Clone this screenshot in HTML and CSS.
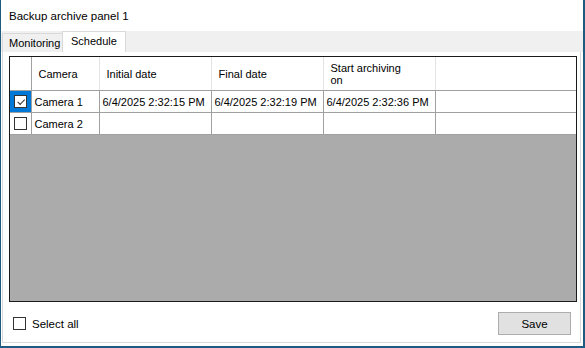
FILE: index.html
```html
<!DOCTYPE html>
<html lang="en">

<head>
    <meta charset="UTF-8">
    <meta name="viewport" content="width=device-width, initial-scale=1.0">
    <title>Backup archive panel 1</title>
    <link rel="stylesheet" href="styles.css">
</head>

<body>
    <div class="window">
        <div class="title">Backup archive panel 1</div>

        <div class="tabs">
            <div class="tab">Monitoring</div>
            <div class="tab active">Schedule</div>
        </div>

        <div class="tab-page">
            <div class="grid">
                <table class="grid-table">
                    <colgroup>
                        <col class="col-check">
                        <col class="col-camera">
                        <col class="col-date">
                        <col class="col-date">
                        <col class="col-date">
                        <col>
                    </colgroup>
                    <thead>
                        <tr>
                            <th></th>
                            <th>Camera</th>
                            <th>Initial date</th>
                            <th>Final date</th>
                            <th>Start archiving<br>on</th>
                            <th class="filler"></th>
                        </tr>
                    </thead>
                    <tbody>
                        <tr>
                            <td class="check-cell selected"><span class="box checked"></span></td>
                            <td>Camera 1</td>
                            <td>6/4/2025 2:32:15 PM</td>
                            <td>6/4/2025 2:32:19 PM</td>
                            <td>6/4/2025 2:32:36 PM</td>
                            <td></td>
                        </tr>
                        <tr>
                            <td class="check-cell"><span class="box"></span></td>
                            <td>Camera 2</td>
                            <td></td>
                            <td></td>
                            <td></td>
                            <td></td>
                        </tr>
                    </tbody>
                </table>
            </div>

            <div class="footer">
                <label class="select-all"><span class="box"></span>Select all</label>
                <button class="save">Save</button>
            </div>
        </div>
    </div>
</body>

</html>
```

FILE: styles.css
```css
body {
    margin: 0;
    background-color: #ffffff;
    font-family: "Liberation Sans", Arial, sans-serif;
    font-size: 11px;
    color: #000;
}

.window {
    width: 585px;
    height: 348px;
    box-sizing: border-box;
    border-left: 1px solid #1f5b80;
    border-right: 2px solid #1f5b80;
    border-bottom: 2px solid #1f5b80;
    background-color: #fff;
    display: flex;
    flex-direction: column;
}

.title {
    height: 31px;
    padding-left: 8px;
    line-height: 32px;
    font-size: 11.5px;
}

.tabs {
    display: flex;
    align-items: flex-end;
    height: 21px;
    padding-left: 1px;
    background-color: #f0f0f0;
}

.tab {
    width: 61px;
    box-sizing: border-box;
    height: 19px;
    line-height: 19px;
    padding-left: 6px;
    border: 1px solid #d9d9d9;
    border-bottom: none;
    background-color: #f0f0f0;
}

.tab.active {
    width: 64px;
    height: 21px;
    line-height: 19px;
    padding-left: 8px;
    background-color: #fff;
    margin-left: -1px;
}

.tab-page {
    flex: 1;
    margin: 0 2px 3px 1px;
    border: 1px solid #d9d9d9;
    border-top: none;
    display: flex;
    flex-direction: column;
    padding: 4px 3px 0 6px;
}

.grid {
    height: 246px;
    box-sizing: border-box;
    border: 1px solid #1a1a1a;
    background-color: #ababab;
}

.grid-table {
    border-collapse: collapse;
    table-layout: fixed;
    width: 100%;
}

.col-check {
    width: 21px;
}

.col-camera {
    width: 68px;
}

.col-date {
    width: 112px;
}

.grid-table th {
    height: 32px;
    padding: 1px 0 0 7px;
    text-align: left;
    font-weight: normal;
    background-color: #fff;
    border-right: 1px solid #e3e3e3;
    border-bottom: 1px solid #a0a0a0;
    line-height: 12px;
}

.grid-table th:first-child {
    border-right: 1px solid #a0a0a0;
}

.grid-table th.filler {
    border-right: none;
}

.grid-table td {
    height: 21px;
    padding: 0 0 0 3px;
    background-color: #fff;
    border-right: 1px solid #a0a0a0;
    border-bottom: 1px solid #a0a0a0;
    white-space: nowrap;
}

.grid-table td:last-child {
    border-right: none;
}

.check-cell {
    text-align: center;
}

.grid-table td.check-cell {
    padding: 0;
}

.check-cell.selected {
    background-color: #0078d7;
}

.box {
    display: inline-block;
    width: 11px;
    height: 11px;
    border: 1px solid #333;
    background-color: #fff;
    vertical-align: middle;
    position: relative;
}

.box.checked::after {
    content: "";
    position: absolute;
    left: 2px;
    top: 1px;
    width: 6px;
    height: 3px;
    border-left: 1px solid #333;
    border-bottom: 1px solid #333;
    transform: rotate(-45deg) translate(-1px, 2px);
}

.footer {
    display: flex;
    justify-content: space-between;
    align-items: center;
    padding: 10px 6px 0 4px;
}

.select-all {
    display: flex;
    align-items: center;
    gap: 6px;
    font-size: 11.5px;
}

.save {
    width: 73px;
    height: 23px;
    font-family: "Liberation Sans", Arial, sans-serif;
    font-size: 11.5px;
    background-color: #e1e1e1;
    border: 1px solid #adadad;
    border-radius: 0;
    padding: 0;
}
```
